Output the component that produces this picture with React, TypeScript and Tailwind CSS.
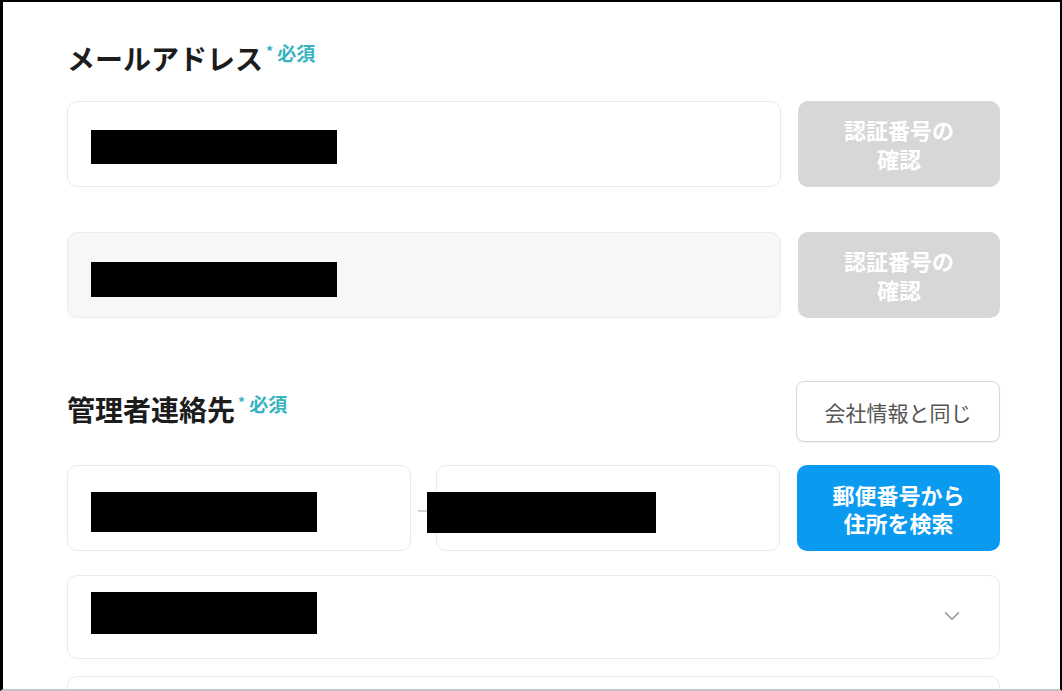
import { ChevronDown } from "lucide-react";

const FONT = "font-['Noto_Sans_CJK_JP','Noto_Sans',sans-serif]";

function Label({ text }: { text: string }) {
  return (
    <div className="flex items-start">
      <span className="text-[28px] font-bold leading-[40px] text-[#1c1c1c]">
        {text}
      </span>
      <span className="ml-[3px] mt-[6px] text-[14px] font-bold leading-[14px] text-[#38b3c1]">
        *
      </span>
      <span className="ml-[4px] mt-[5px] text-[19px] font-bold leading-[20px] text-[#38b3c1]">
        必須
      </span>
    </div>
  );
}

// redacted value in the screenshot
function Redacted({ w, h }: { w: string; h: string }) {
  return <div className={`bg-black ${w} ${h}`} />;
}

function VerifyButton() {
  return (
    <button className="flex h-full w-[202px] shrink-0 flex-col items-center justify-center rounded-[10px] bg-[#d7d7d7] text-[22px] font-bold leading-[29px] text-white">
      <span>認証番号の</span>
      <span>確認</span>
    </button>
  );
}

export default function App() {
  return (
    <div
      className={`${FONT} h-[691px] w-[1062px] overflow-hidden border-t-2 border-r-2 border-l-[3px] border-b-2 border-t-black border-r-black border-l-black border-b-[#c4c4c4] bg-white pl-[64px] pr-[60px] pt-[36px]`}
    >
      {/* email */}
      <Label text="メールアドレス" />

      <div className="mt-[23px] flex h-[86px] gap-[17px]">
        <div className="flex flex-1 items-center rounded-[10px] border border-[#ebebeb] bg-white pl-[23px] pt-[5px]">
          <Redacted w="w-[246px]" h="h-[34px]" />
        </div>
        <VerifyButton />
      </div>

      <div className="mt-[45px] flex h-[86px] gap-[17px]">
        <div className="flex flex-1 items-center rounded-[10px] border border-[#ebebeb] bg-[#f7f7f7] pl-[23px] pt-[8px]">
          <Redacted w="w-[246px]" h="h-[35px]" />
        </div>
        <VerifyButton />
      </div>

      {/* contact */}
      <div className="mt-[63px] flex h-[61px] items-center justify-between">
        <div className="-mt-[6px]">
          <Label text="管理者連絡先" />
        </div>
        <button className="h-[61px] w-[204px] rounded-[8px] border border-[#d8d8d8] bg-white text-[21px] leading-[28px] text-[#555555] shadow-[0_1px_2px_rgba(0,0,0,0.06)]">
          会社情報と同じ
        </button>
      </div>

      <div className="mt-[23px] flex h-[86px]">
        <div className="flex w-[344px] items-center rounded-[10px] border border-[#ebebeb] bg-white pl-[23px] pt-[8px]">
          <Redacted w="w-[226px]" h="h-[40px]" />
        </div>
        <div className="flex w-[25px] items-center justify-center pt-[6px]">
          <div className="h-[2px] w-[12px] bg-[#d4d4d4]" />
        </div>
        <div className="flex w-[344px] items-center rounded-[10px] border border-[#ebebeb] bg-white pt-[8px]">
          <div className="-ml-[10px]">
            <Redacted w="w-[229px]" h="h-[41px]" />
          </div>
        </div>
        <button className="ml-[17px] flex w-[203px] flex-col items-center justify-center rounded-[10px] bg-[#0a9af0] text-[22px] font-bold leading-[28px] text-white">
          <span>郵便番号から</span>
          <span>住所を検索</span>
        </button>
      </div>

      <div className="mt-[24px] flex h-[84px] items-center justify-between rounded-[10px] border border-[#ebebeb] bg-white pb-[8px] pl-[23px] pr-[34px]">
        <Redacted w="w-[226px]" h="h-[42px]" />
        <div className="pt-[6px]">
          <ChevronDown className="h-[26px] w-[26px] text-[#8f8f8f]" strokeWidth={1.3} />
        </div>
      </div>

      <div className="mt-[17px] h-[84px] rounded-[10px] border border-[#ebebeb] bg-white" />
    </div>
  );
}
